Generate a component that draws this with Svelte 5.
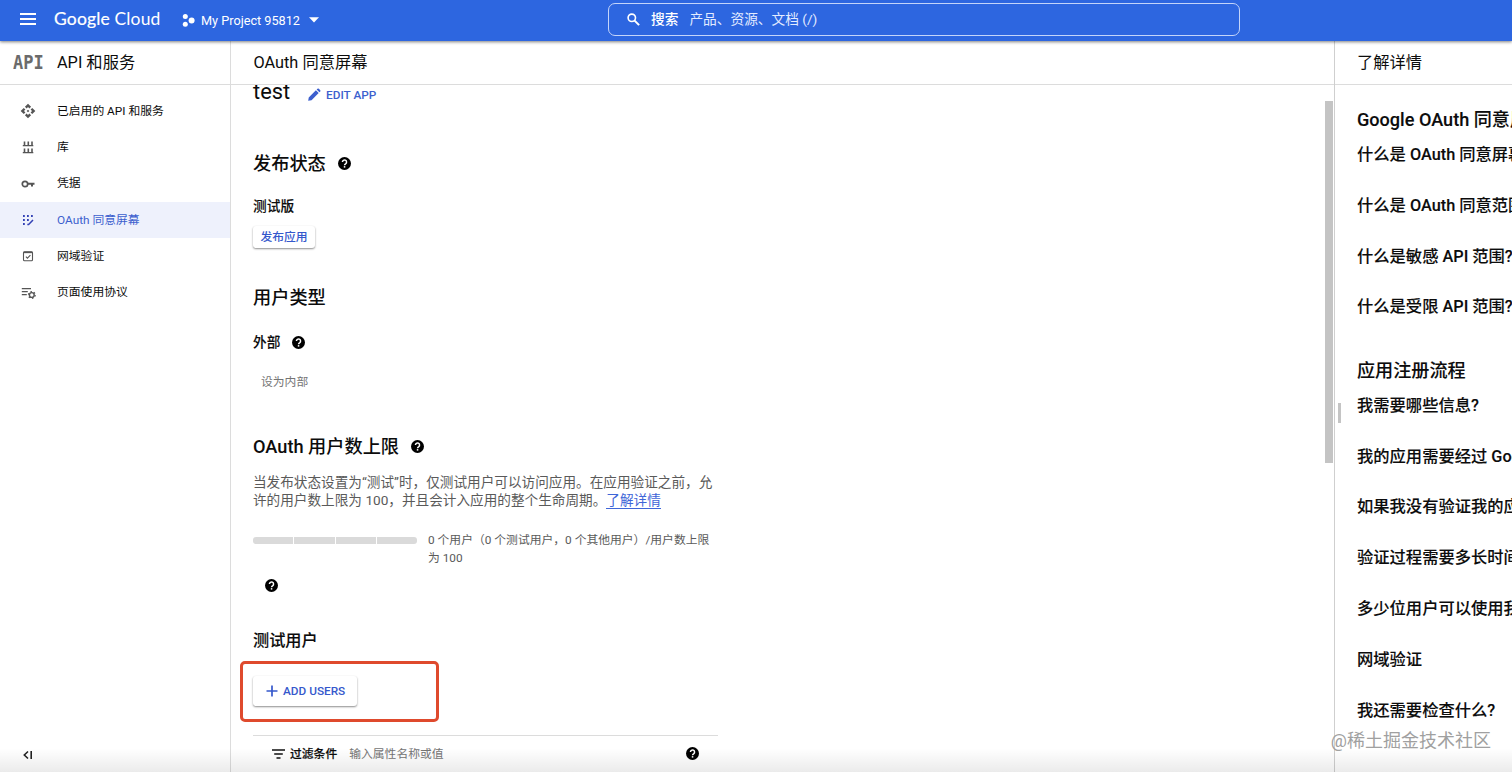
<script lang="ts">
	type NavItem = { icon: string; label: string };

	const navItems: NavItem[] = [
		{ icon: 'api', label: '已启用的 API 和服务' },
		{ icon: 'library', label: '库' },
		{ icon: 'key', label: '凭据' },
		{ icon: 'consent', label: 'OAuth 同意屏幕' },
		{ icon: 'domain', label: '网域验证' },
		{ icon: 'agreement', label: '页面使用协议' }
	];

	let active = $state('consent');

	const helpSections = [
		{
			title: 'Google OAuth 同意屏幕',
			questions: [
				'什么是 OAuth 同意屏幕?',
				'什么是 OAuth 同意范围?',
				'什么是敏感 API 范围?',
				'什么是受限 API 范围?'
			]
		},
		{
			title: '应用注册流程',
			questions: [
				'我需要哪些信息?',
				'我的应用需要经过 Google 验证吗?',
				'如果我没有验证我的应用会怎样?',
				'验证过程需要多长时间?',
				'多少位用户可以使用我的应用?',
				'网域验证',
				'我还需要检查什么?'
			]
		}
	];
</script>

{#snippet help()}
	<svg class="help" viewBox="0 0 24 24" aria-hidden="true">
		<circle cx="12" cy="12" r="12" fill="#000" />
		<path d="M8.2 9.3a3.8 3.8 0 1 1 6.2 2.9c-1.3 1-2.3 1.5-2.3 3" fill="none" stroke="#fff" stroke-width="2.7" />
		<rect x="10.7" y="16.8" width="2.8" height="2.8" fill="#fff" />
	</svg>
{/snippet}

<div class="console">
	<header class="topbar">
		<svg class="menu" viewBox="0 0 16 12" aria-hidden="true">
			<path d="M0 1h16M0 6h16M0 11h16" stroke="#fff" stroke-width="2" />
		</svg>
		<div class="brand"><span class="brand-name">Google</span> Cloud</div>
		<button class="project">
			<svg class="project-icon" viewBox="0 0 13 13" aria-hidden="true" fill="#fff">
				<circle cx="3.3" cy="2.6" r="2.5" />
				<circle cx="3.3" cy="10.3" r="2.5" />
				<circle cx="9.6" cy="6.5" r="3" />
			</svg>
			<span>My Project 95812</span>
			<svg class="caret" viewBox="0 0 10 6" aria-hidden="true"><path d="M0 .3h10L5 5.6z" fill="#fff" /></svg>
		</button>
		<div class="search">
			<svg class="search-icon" viewBox="0 0 13 13" aria-hidden="true">
				<circle cx="4.8" cy="4.8" r="3.7" fill="none" stroke="#fff" stroke-width="1.6" />
				<path d="M7.6 7.6l4.5 4.5" stroke="#fff" stroke-width="2" />
			</svg>
			<b>搜索</b>
			<span>产品、资源、文档 (/)</span>
		</div>
	</header>

	<div class="body">
		<aside class="sidebar">
			<div class="bar product">
				<span class="api-logo">API</span>
				<span>API 和服务</span>
			</div>
			<nav>
				{#each navItems as item}
					<button class="nav-item" class:active={active === item.icon} onclick={() => (active = item.icon)}>
						<svg class="nav-icon" viewBox="0 0 16 16" aria-hidden="true">
							{#if item.icon === 'api'}
								<path
									transform="scale(.667)"
									fill="currentColor"
									d="M14 12l-2 2-2-2 2-2zM12 6l2.1 2.1 2.5-2.5L12 1 7.4 5.6l2.500 2.500zM6 12l2.100-2.100-2.500-2.500L1 12l4.600 4.600 2.500-2.500zM18 12l-2.100 2.100 2.500 2.500L23 12l-4.600-4.600-2.500 2.500zM12 18l-2.100-2.100-2.500 2.500L12 23l4.600-4.600-2.500-2.500z"
								/>
							{:else if item.icon === 'library'}
								<path d="M4.5 2.5v4M8.3 2.5v4M12 2.5v4M4.5 9.5v4M8.3 9.5v4M12 9.5v4" stroke="currentColor" stroke-width="1.6" />
								<path d="M2.8 6.6h10.5M2.8 13.7h10.5" stroke="currentColor" stroke-width="1.2" />
							{:else if item.icon === 'key'}
								<circle cx="5" cy="8" r="2.7" fill="none" stroke="currentColor" stroke-width="1.7" />
								<path d="M7.5 7.7h7M12 7.7v2.8" fill="none" stroke="currentColor" stroke-width="2" />
							{:else if item.icon === 'consent'}
								<path d="M3 4h1.8M7 4h1.8M11 4h1.8M3 8h1.8M7 8h1.8M3 12h1.8" stroke="currentColor" stroke-width="1.8" />
								<path d="M7.3 12.5h1.3L13 8" fill="none" stroke="currentColor" stroke-width="1.5" />
							{:else if item.icon === 'domain'}
								<rect x="3.5" y="3.9" width="9" height="8.8" rx="1" fill="none" stroke="currentColor" stroke-width="1.1" />
								<path d="M3.5 4.4h9" stroke="currentColor" stroke-width="1.5" />
								<path d="M5.9 8.6l1.5 1.5 3-3" fill="none" stroke="currentColor" stroke-width="1.1" />
							{:else}
								<path d="M1.8 3.7H11M1.8 6.7h6M1.8 9.7h5" stroke="currentColor" stroke-width="1.3" />
								<circle cx="11.8" cy="10" r="2.4" fill="none" stroke="currentColor" stroke-width="1.4" />
								<circle cx="11.8" cy="10" r="3.4" fill="none" stroke="currentColor" stroke-width="1.2" stroke-dasharray="1.5 2.06" />
							{/if}
						</svg>
						<span>{item.label}</span>
					</button>
				{/each}
			</nav>
			<button class="collapse" aria-label="Collapse">
				<svg viewBox="0 0 10 10" aria-hidden="true">
					<path d="M5 1.5L1.3 5 5 8.500" fill="none" stroke="#222" stroke-width="1.6" />
					<path d="M8.2 1v8" stroke="#222" stroke-width="1.6" />
				</svg>
			</button>
		</aside>

		<main class="main">
			<div class="bar page-title">OAuth 同意屏幕</div>
			<div class="scroll">
				<div class="content">
					<div class="app-row">
						<h1>test</h1>
						<button class="edit">
							<svg viewBox="0 0 14 14" aria-hidden="true">
								<path d="M.2 13.8l.6-3.6L8.5 2.5l3 3-7.700 7.700zM9.300 1.700l.9-.9q.8-.6 1.500 0l1.500 1.500q.6.700 0 1.500l-.9.900z" fill="currentColor" />
							</svg>
							EDIT APP
						</button>
					</div>

					<h2 class="status-title"><span>发布状态</span> {@render help()}</h2>
					<h4 class="status">测试版</h4>
					<button class="raised publish">发布应用</button>

					<h2 class="type-title"><span>用户类型</span></h2>
					<h4 class="type">外部 {@render help()}</h4>
					<button class="internal" disabled>设为内部</button>

					<h2 class="cap-title"><span>OAuth 用户数上限</span> {@render help()}</h2>
					<p class="cap-text">
						当发布状态设置为“测试”时，仅测试用户可以访问应用。在应用验证之前，允<br />许的用户数上限为 100，并且会计入应用的整个生命周期。<a href="#learn">了解详情</a>
					</p>
					<div class="quota">
						<div class="meter"><i></i><i></i><i></i><i></i></div>
						<div class="quota-text">0 个用户（0 个测试用户，0 个其他用户）/用户数上限<br />为 100</div>
					</div>
					<div class="quota-help">{@render help()}</div>

					<h3>测试用户</h3>
					<div class="add-row">
						<button class="raised add">
							<svg viewBox="0 0 12 12" aria-hidden="true"><path d="M6 .5v11M.5 6h11" stroke="currentColor" stroke-width="1.7" /></svg>
							ADD USERS
						</button>
						<div class="highlight"></div>
					</div>

					<div class="filter">
						<svg class="filter-icon" viewBox="0 0 13 10" aria-hidden="true">
							<path d="M0 1h13M2.2 5h8.6M4.5 9h4" stroke="#111" stroke-width="1.7" />
						</svg>
						<b>过滤条件</b>
						<span>输入属性名称或值</span>
						{@render help()}
					</div>
				</div>
				<div class="track"><div class="thumb"></div></div>
			</div>
		</main>

		<aside class="info">
			<div class="bar info-title">了解详情</div>
			<div class="info-body">
				{#each helpSections as section}
					<section>
						<h2>{section.title}</h2>
						{#each section.questions as question}
							<div class="question">{question}</div>
						{/each}
					</section>
				{/each}
			</div>
			<div class="grip"></div>
		</aside>
	</div>

	<div class="fade"></div>
	<div class="watermark">@稀土掘金技术社区</div>
</div>

<style>
	:global(body) {
		background: #fff;
		overflow: hidden;
	}

	.console {
		position: relative;
		display: flex;
		flex-direction: column;
		width: 1512px;
		height: 772px;
		overflow: hidden;
		font-family: Roboto, 'Noto Sans CJK SC', sans-serif;
		font-size: 12px;
		color: #0c0c0c;
		white-space: nowrap;
	}

	button {
		border: 0;
		padding: 0;
		background: none;
		font: inherit;
		color: inherit;
		cursor: pointer;
	}

	h1,
	h2,
	h3,
	h4,
	p {
		margin: 0;
		font-weight: 500;
	}

	svg {
		display: block;
		flex: none;
	}

	.topbar {
		position: relative;
		z-index: 2;
		display: flex;
		align-items: center;
		flex: none;
		height: 41px;
		box-sizing: border-box;
		padding: 0 0 3px 20px;
		background: #2d66e0;
		box-shadow: 0 1px 3px rgba(0, 0, 0, 0.5);
		color: #fff;
	}

	.menu {
		width: 16px;
		height: 12px;
	}

	.brand {
		width: 106px;
		margin: -1px 0 0 18px;
		font-family: Lato, sans-serif;
		font-size: 17.5px;
		letter-spacing: 0.15px;
	}

	.brand-name {
		-webkit-text-stroke: 0.2px #fff;
	}

	.project {
		display: flex;
		align-items: center;
		margin: 2px 0 0 22px;
		font-size: 12.7px;
	}

	.project-icon {
		width: 13px;
		height: 13px;
		margin-right: 6px;
	}

	.caret {
		width: 10px;
		height: 6px;
		margin-left: 9px;
	}

	.search {
		display: flex;
		align-items: center;
		width: 632px;
		height: 33px;
		box-sizing: border-box;
		margin: 0 272px 0 auto;
		padding-left: 18px;
		border: 1px solid #c3d4fa;
		border-radius: 7px;
		font-size: 13.7px;
		line-height: 20px;
	}

	.search b,
	.search span {
		margin-top: -1px;
	}

	.search b {
		margin-left: 11px;
		margin-right: 11px;
		font-weight: 500;
	}

	.search span {
		color: #e3ebff;
	}

	.search-icon {
		width: 13px;
		height: 13px;
	}

	.body {
		display: flex;
		flex: 1;
		min-height: 0;
	}

	.bar {
		display: flex;
		align-items: center;
		flex: none;
		height: 44px;
		box-sizing: border-box;
		padding-bottom: 3px;
		border-bottom: 1px solid #dcdcdc;
		font-size: 16.3px;
	}

	.sidebar {
		display: flex;
		flex-direction: column;
		flex: none;
		width: 231px;
		box-sizing: border-box;
		border-right: 1px solid #dcdcdc;
	}

	.product {
		padding-left: 13px;
	}

	.api-logo {
		width: 44px;
		padding-top: 2px;
		font-family: 'DejaVu Sans Mono', monospace;
		font-size: 17px;
		font-weight: 700;
		color: #6b6b6b;
		transform: scaleY(1.15);
	}

	nav {
		padding-top: 8px;
	}

	.nav-item {
		display: flex;
		align-items: center;
		width: 100%;
		height: 36.3px;
		padding-left: 20px;
		font-size: 11.8px;
	}

	.nav-item span {
		padding-bottom: 4px;
	}

	.nav-icon {
		width: 16px;
		height: 16px;
		margin-right: 21px;
		color: #555;
	}

	.nav-item.active {
		background: #eef1fc;
		color: #3c5fce;
	}

	.active .nav-icon {
		color: #3342b5;
	}

	.collapse {
		width: 10px;
		height: 10px;
		margin: auto 0 12px 23px;
	}

	.main {
		display: flex;
		flex-direction: column;
		flex: none;
		width: 1103px;
	}

	.page-title {
		padding-left: 22.5px;
	}

	.scroll {
		display: flex;
		justify-content: space-between;
		flex: 1;
		min-height: 0;
		overflow: hidden;
	}

	.content {
		display: flex;
		flex-direction: column;
		align-items: flex-start;
		width: 465px;
		padding-left: 22px;
	}

	.content > * {
		flex: none;
	}

	.content h2,
	.content h4 {
		display: flex;
		align-items: center;
	}

	.content h2 {
		height: 24px;
		font-size: 18.2px;
	}

	.content h2 span {
		padding-bottom: 3px;
	}

	.content h4 {
		height: 20px;
		padding-bottom: 2px;
		box-sizing: border-box;
		font-size: 13.7px;
	}

	.help {
		width: 13px;
		height: 13px;
		margin-left: 12px;
	}

	h2 .help {
		margin-top: 1px;
	}

	h4 .help {
		margin-top: 2px;
	}

	.app-row {
		display: flex;
		align-items: center;
		height: 24px;
		margin-top: -5px;
	}

	h1 {
		font-size: 21.8px;
		font-weight: 400;
		line-height: 24px;
	}

	.edit {
		display: flex;
		align-items: center;
		margin: 5px 0 0 18px;
		font-size: 11.8px;
		font-weight: 500;
		color: #3c5fce;
	}

	.edit svg {
		width: 13px;
		height: 13px;
		margin-right: 5px;
	}

	.status-title {
		margin-top: 47px;
	}

	.status {
		margin-top: 21px;
	}

	.raised {
		border-radius: 3px;
		background: #fff;
		box-shadow: 0 1px 2px rgba(0, 0, 0, 0.45);
		font-size: 11.8px;
		font-weight: 500;
		color: #3558cc;
	}

	.publish {
		width: 62px;
		height: 22px;
		margin-top: 10px;
		padding-bottom: 4px;
	}

	.type-title {
		margin-top: 37px;
	}

	.type {
		margin-top: 23px;
	}

	.internal {
		height: 22px;
		margin: 19px 0 0 8px;
		padding-bottom: 4px;
		font-size: 11.8px;
		color: #757575;
	}

	.cap-title {
		margin-top: 41px;
	}

	.cap-text {
		margin-top: 15px;
		font-size: 13.64px;
		font-weight: 400;
		line-height: 18.2px;
		color: #5a5a5a;
	}

	.cap-text a {
		border-bottom: 1px solid #3f66d8;
		color: #3f66d8;
		text-decoration: none;
	}

	.quota {
		display: flex;
		margin-top: 22px;
		font-size: 11.8px;
		line-height: 18px;
		color: #5a5a5a;
	}

	.meter {
		display: flex;
		gap: 1px;
		width: 164px;
		height: 7px;
		margin: 6px 11px 0 0;
		border-radius: 3px;
		overflow: hidden;
	}

	.meter i {
		flex: 1;
		background: #dadada;
	}

	.quota-help {
		height: 16px;
		margin-top: 12px;
	}

	h3 {
		height: 24px;
		margin-top: 34px;
		font-size: 16.2px;
		line-height: 24px;
	}

	.add-row {
		position: relative;
		margin-top: 23px;
	}

	.add {
		display: flex;
		align-items: center;
		width: 104px;
		height: 30px;
		padding-left: 13px;
	}

	.add svg {
		width: 12px;
		height: 12px;
		margin-right: 5px;
	}

	/* marker around the step the reader has to follow */
	.highlight {
		position: absolute;
		top: -15px;
		left: -13px;
		width: 199px;
		height: 61px;
		box-sizing: border-box;
		border: 3px solid #df4a2d;
		border-radius: 5px;
	}

	.filter {
		display: flex;
		align-items: center;
		width: 465px;
		height: 37px;
		box-sizing: border-box;
		margin-top: 29px;
		padding: 0 19px;
		border-top: 1px solid #dcdcdc;
		font-size: 11.8px;
	}

	.filter b,
	.filter span {
		padding-bottom: 3px;
	}

	.filter b {
		margin: 0 12px 0 5px;
		font-weight: 500;
		-webkit-text-stroke: 0.2px #111;
	}

	.filter span {
		color: #757575;
	}

	.filter-icon {
		width: 13px;
		height: 10px;
		margin-top: -1px;
	}

	.filter .help {
		margin: -1px 0 0 auto;
	}

	.track {
		width: 9px;
		padding-top: 16px;
	}

	.thumb {
		width: 8px;
		height: 362px;
		background: #c4c4c4;
	}

	.info {
		position: relative;
		flex: 1;
		min-width: 0;
		border-left: 1px solid #cfcfcf;
		overflow: hidden;
	}

	.info-title {
		padding-left: 22px;
	}

	.info-body {
		padding: 23px 0 0 22px;
	}

	.info-body h2 {
		height: 24px;
		font-size: 18.1px;
		line-height: 24px;
	}

	.question {
		height: 24px;
		margin: 11px 0 26.8px;
		font-size: 16.3px;
		font-weight: 500;
		line-height: 24px;
	}

	.info-body h2,
	.question,
	h3,
	.content h4 {
		-webkit-text-stroke: 0.1px #0c0c0c;
	}

	.question + .question {
		margin-top: 0;
	}

	section + section {
		margin-top: 39.5px;
	}

	.grip {
		position: absolute;
		top: 362px;
		left: 3px;
		width: 3px;
		height: 20px;
		background: #c4c4c4;
	}

	.fade {
		position: absolute;
		right: 0;
		bottom: 0;
		left: 0;
		height: 24px;
		background: linear-gradient(rgba(0, 0, 0, 0), rgba(0, 0, 0, 0.08));
	}

	.watermark {
		position: absolute;
		top: 728px;
		right: 21px;
		font-size: 18px;
		line-height: 26px;
		color: #a0a0a0;
	}
</style>
